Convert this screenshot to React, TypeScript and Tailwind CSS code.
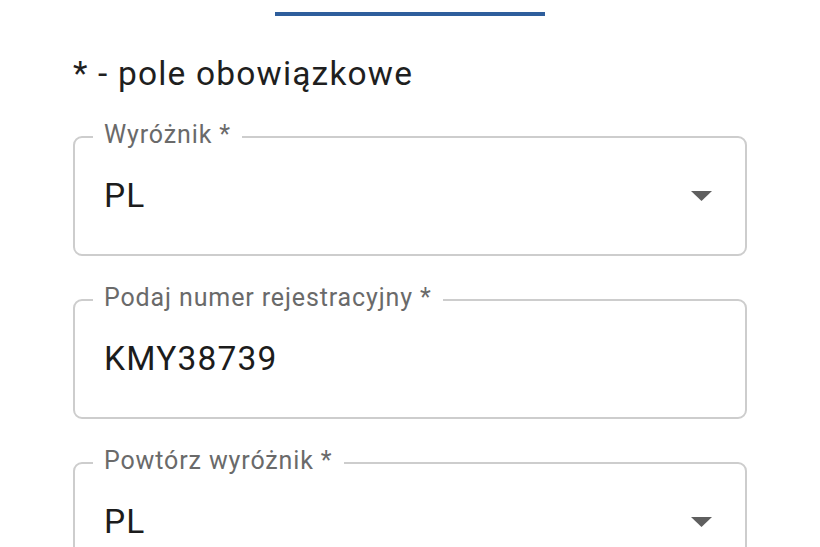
import React from 'react';

type FieldProps = {
  label: string;
  value: string;
  select?: boolean;
};

function Field({ label, value, select }: FieldProps) {
  return (
    <div className="relative h-[120px] rounded-[9px] border-2 border-[#cdcdcd] flex items-center pl-[29px] pr-[33px]">
      {/* floating label sits on the top border */}
      <span className="absolute -top-[17px] left-[18px] bg-white px-[11px] text-[25px] leading-[28px] tracking-[0.035em] text-[#6a6a6a] whitespace-nowrap">
        {label}
      </span>
      <span className="text-[33.5px] leading-[40px] tracking-[0.035em] text-[#1c1c1c]">{value}</span>
      {select && (
        <svg className="ml-auto" width="21" height="10" viewBox="0 0 21 10">
          <path d="M0 0 L21 0 L10.5 10 Z" fill="#5f5f5f" />
        </svg>
      )}
    </div>
  );
}

export default function App() {
  return (
    <div className="min-h-screen bg-white font-['Roboto','Liberation_Sans',sans-serif] overflow-hidden">
      <div className="px-[73px] pt-[12px]">
        <div className="mx-auto w-[270px] h-[4px] bg-[#2e5e9c]" />
        <h2 className="mt-[38px] text-[33.5px] leading-[40px] tracking-[0.035em] text-[#1f1f1f]">
          * - pole obowiązkowe
        </h2>
        <div className="mt-[42px] flex flex-col gap-[43px]">
          <Field label="Wyróżnik *" value="PL" select />
          <Field label="Podaj numer rejestracyjny *" value="KMY38739" />
          <Field label="Powtórz wyróżnik *" value="PL" select />
        </div>
      </div>
    </div>
  );
}
